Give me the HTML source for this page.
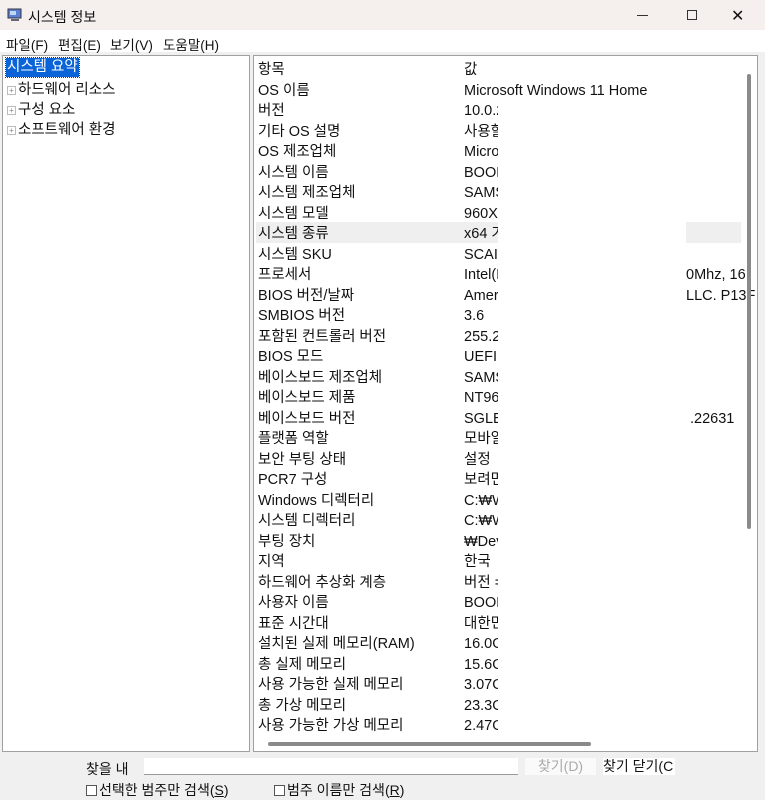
<!DOCTYPE html>
<html><head><meta charset="utf-8"><style>
*{margin:0;padding:0;box-sizing:border-box}
body{width:765px;height:800px;background:#f0f0f0;font-family:"Liberation Sans","Noto Sans CJK KR",sans-serif;font-size:14.5px;color:#111;position:relative;overflow:hidden}
.a{position:absolute;white-space:nowrap}
#title{left:0;top:0;width:765px;height:30px;background:#f5efee}
#menu{left:0;top:30px;width:765px;height:22px;background:#fff}
#left{left:2px;top:55px;width:248px;height:697px;background:#fff;border:1px solid #a0a0a0}
#right{left:253px;top:55px;width:505px;height:697px;background:#fff;border:1px solid #a0a0a0;overflow:hidden}
.r{position:absolute;left:4px;height:20px;line-height:20px;width:480px;margin-top:2px}
.r span{position:absolute;left:206px}
.cb{display:inline-block;width:11px;height:11px;border:1px solid #555;vertical-align:-1px;margin-right:2px;background:#fff}
.pl{display:inline-block;width:9px;height:9px;border:1px solid #bbb;font-size:8px;line-height:7px;text-align:center;color:#888;margin-right:2px;vertical-align:1px}
.m{font-size:13.5px;top:34px}
</style></head><body>
<div class="a" id="title"></div>
<svg class="a" style="left:7px;top:8px" width="16" height="14"><rect x="1" y="1" width="13" height="9" fill="#5a7fd0" stroke="#334"/><rect x="3" y="3" width="6" height="4" fill="#c0d6f5"/><rect x="4" y="11" width="8" height="2" fill="#667"/></svg>
<div class="a" style="left:28px;top:7px;font-size:14px">시스템 정보</div>
<div class="a" style="left:637px;top:15px;width:11px;height:1px;background:#333"></div>
<div class="a" style="left:687px;top:10px;width:10px;height:10px;border:1px solid #333"></div>
<div class="a" style="left:731px;top:6px;font-size:16px">✕</div>
<div class="a" id="menu"></div>
<div class="a m" style="left:6px">파일(F)</div>
<div class="a m" style="left:58px">편집(E)</div>
<div class="a m" style="left:110px">보기(V)</div>
<div class="a m" style="left:163px">도움말(H)</div>
<div class="a" id="left">
<div class="a" style="left:3px;top:2px;background:#0a64d8;color:#fff;padding:0 1px;line-height:19px;outline:1px dotted #333">시스템 요약</div>
<div class="a" style="left:4px;top:22px"><span class="pl">+</span>하드웨어 리소스</div>
<div class="a" style="left:4px;top:42px"><span class="pl">+</span>구성 요소</div>
<div class="a" style="left:4px;top:62px"><span class="pl">+</span>소프트웨어 환경</div>
</div>
<div class="a" id="right">
<div class="a" style="left:2px;top:166px;width:485px;height:21px;background:#efefef"></div>
<div class="r" style="top:2px">항목<span>값</span></div>
<div class="r" style="top:23px">OS 이름<span>Microsoft Windows 11 Home</span></div>
<div class="r" style="top:43px">버전<span>10.0.22631</span></div>
<div class="r" style="top:64px">기타 OS 설명<span>사용할 수 없음</span></div>
<div class="r" style="top:84px">OS 제조업체<span>Microsoft</span></div>
<div class="r" style="top:105px">시스템 이름<span>BOOK</span></div>
<div class="r" style="top:125px">시스템 제조업체<span>SAMSUNG</span></div>
<div class="r" style="top:146px">시스템 모델<span>960XGK</span></div>
<div class="r" style="top:166px">시스템 종류<span>x64 기반 PC</span></div>
<div class="r" style="top:187px">시스템 SKU<span>SCAI-</span></div>
<div class="r" style="top:207px">프로세서<span>Intel(R) Core</span></div>
<div class="r" style="top:228px">BIOS 버전/날짜<span>American</span></div>
<div class="r" style="top:248px">SMBIOS 버전<span>3.6</span></div>
<div class="r" style="top:269px">포함된 컨트롤러 버전<span>255.255</span></div>
<div class="r" style="top:289px">BIOS 모드<span>UEFI</span></div>
<div class="r" style="top:310px">베이스보드 제조업체<span>SAMSUNG</span></div>
<div class="r" style="top:330px">베이스보드 제품<span>NT960</span></div>
<div class="r" style="top:351px">베이스보드 버전<span>SGLB6</span></div>
<div class="r" style="top:371px">플랫폼 역할<span>모바일</span></div>
<div class="r" style="top:392px">보안 부팅 상태<span>설정</span></div>
<div class="r" style="top:412px">PCR7 구성<span>보려면</span></div>
<div class="r" style="top:433px">Windows 디렉터리<span>C:₩Windows</span></div>
<div class="r" style="top:453px">시스템 디렉터리<span>C:₩Windows</span></div>
<div class="r" style="top:474px">부팅 장치<span>₩Device</span></div>
<div class="r" style="top:494px">지역<span>한국</span></div>
<div class="r" style="top:515px">하드웨어 추상화 계층<span>버전 =</span></div>
<div class="r" style="top:535px">사용자 이름<span>BOOK</span></div>
<div class="r" style="top:556px">표준 시간대<span>대한민국</span></div>
<div class="r" style="top:576px">설치된 실제 메모리(RAM)<span>16.0GB</span></div>
<div class="r" style="top:597px">총 실제 메모리<span>15.6GB</span></div>
<div class="r" style="top:617px">사용 가능한 실제 메모리<span>3.07GB</span></div>
<div class="r" style="top:638px">총 가상 메모리<span>23.3GB</span></div>
<div class="r" style="top:658px">사용 가능한 가상 메모리<span>2.47GB</span></div>
<div class="a" style="left:244px;top:43px;width:188px;height:636px;background:#fff"></div>
<div class="a" style="left:432px;top:209px;line-height:20px">0Mhz, 16</div>
<div class="a" style="left:432px;top:230px;line-height:20px">LLC. P13F</div>
<div class="a" style="left:436px;top:353px;line-height:20px">.22631</div>
<div class="a" style="left:493px;top:18px;width:4px;height:455px;background:#8a8a8a;border-radius:2px"></div>
<div class="a" style="left:14px;top:686px;width:323px;height:4px;background:#8a8a8a;border-radius:2px"></div>
</div>
<div class="a" style="left:86px;top:759px;font-size:14px">찾을 내</div>
<div class="a" style="left:144px;top:758px;width:374px;height:17px;background:#fff;border-bottom:1px solid #999"></div>
<div class="a" style="left:525px;top:758px;width:71px;height:17px;background:#fafafa;color:#aaa;text-align:center;line-height:17px;font-size:14px">찾기(D)</div>
<div class="a" style="left:603px;top:758px;width:72px;height:17px;background:#fff;line-height:17px;overflow:hidden;font-size:14px">찾기 닫기(C</div>
<div class="a" style="left:86px;top:780px;font-size:14px"><span class="cb"></span>선택한 범주만 검색(<u>S</u>)</div>
<div class="a" style="left:274px;top:780px;font-size:14px"><span class="cb"></span>범주 이름만 검색(<u>R</u>)</div>
</body></html>
